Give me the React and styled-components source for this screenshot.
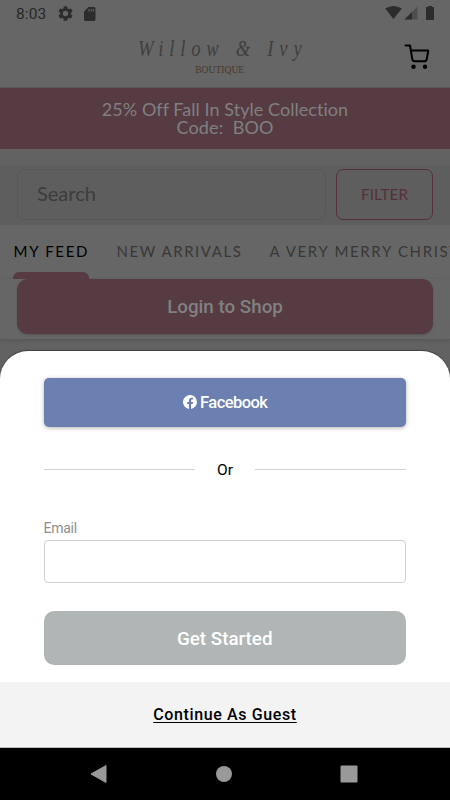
import React from "react";
import styled, { createGlobalStyle } from "styled-components";

const GlobalStyle = createGlobalStyle`
  * { box-sizing: border-box; }
  body { margin: 0; background: #000; }
  button, input { font: inherit; margin: 0; padding: 0; }
`;

const Screen = styled.div`
  width: 450px;
  height: 800px;
  display: flex;
  flex-direction: column;
  overflow: hidden;
  background: #666;
  font-family: Roboto, sans-serif;
`;

const Shop = styled.div`
  height: 400px;
  flex: none;
  background: #626262;
  font-family: Lato, sans-serif;
`;

const StatusBar = styled.div`
  height: 28px;
  display: flex;
  justify-content: space-between;
  padding: 0 15px 0 16px;
  background: #666;
`;

const StatusGroup = styled.div`
  display: flex;
  align-items: center;
  gap: 11px;
  height: 27px;
`;

const Clock = styled.span`
  font: 400 15.5px/28px Roboto, sans-serif;
  letter-spacing: 0.1px;
  color: #282828;
  width: 31px;
`;

const Header = styled.header`
  height: 60px;
  display: grid;
  grid-template-columns: 120px 1fr 120px;
  background: #666;
  border-bottom: 1px solid #5c5659;
`;

const Brand = styled.div`
  grid-column: 2;
  display: flex;
  flex-direction: column;
  align-items: center;
`;

const BrandName = styled.div`
  height: 36px;
  margin-left: -6px;
  white-space: nowrap;
  font: italic 400 24px/41px "Liberation Serif", serif;
  letter-spacing: 7.4px;
  word-spacing: 1px;
  transform: scaleX(0.78);
  color: #3f3f3f;
`;

const BrandSub = styled.div`
  font: 400 9.6px/12px "Liberation Serif", serif;
  color: #49382c;
  margin-left: -12px;
`;

const CartButton = styled.button`
  width: 26px;
  height: 26px;
  margin: 16px 21px 0 auto;
  border: 0;
  background: none;
  color: #000;
`;

const Banner = styled.div`
  height: 61px;
  padding-top: 12px;
  background: #563b43;
  color: #808080;
  text-align: center;
  font-size: 18px;
  line-height: 18px;
  white-space: pre;
`;

const BannerLine = styled.div`
  letter-spacing: ${(p) => p.$spacing}px;
`;

const SearchBand = styled.div`
  height: 60px;
  margin-top: 16px;
  padding: 4px 17px 0;
  display: flex;
  gap: 10px;
  background: #5e5e5e;
`;

const SearchBox = styled.div`
  width: 309px;
  height: 51px;
  padding-left: 19px;
  border: 1px solid #575757;
  border-radius: 7px;
  font-size: 20px;
  line-height: 47px;
  color: #3c3c3c;
`;

const FilterButton = styled.button`
  width: 97px;
  height: 51px;
  padding-bottom: 2px;
  border: 1px solid #563039;
  border-radius: 7px;
  background: none;
  color: #563039;
  font-size: 15.4px;
`;

const Tabs = styled.nav`
  height: 54px;
  padding-left: 13px;
  display: flex;
  overflow: hidden;
  background: #666;
  white-space: nowrap;
`;

const Tab = styled.div`
  flex: none;
  width: ${(p) => p.$width}px;
  margin-right: 27px;
  height: 54px;
  display: flex;
  flex-direction: column;
  font-size: 15px;
  line-height: 53px;
  text-indent: 0.5px;
  letter-spacing: ${(p) => p.$spacing}px;
  color: ${(p) => (p.$active ? "#000" : "#383838")};

  &::after {
    content: "";
    height: 7px;
    flex: none;
    margin-top: -6px;
    border-radius: 6px 6px 0 0;
    background: ${(p) => (p.$active ? "#563b43" : "transparent")};
  }
`;

const LoginWrap = styled.div`
  height: 61px;
  padding: 0 17px;
  background: #666;
  border-bottom: 1px solid #595959;
  box-shadow: 0 1px 3px #595959;
`;

const LoginButton = styled.button`
  display: block;
  width: 100%;
  height: 55px;
  border: 0;
  border-radius: 11px;
  background: #563b43;
  color: #818181;
  box-shadow: 0 1px 2px #555;
  font: 500 18.8px/56px Roboto, sans-serif;
`;

const Sheet = styled.section`
  height: 397px;
  flex: none;
  margin-top: -49px;
  position: relative;
  display: flex;
  flex-direction: column;
  border-radius: 28px 28px 0 0;
  background: #fff;
  box-shadow: 0 -1px 1px #404040;
  overflow: hidden;
`;

const SheetBody = styled.div`
  height: 330.5px;
  padding: 26.5px 44px 0 43.5px;
  width: 450px;
`;

const FacebookButton = styled.button`
  width: 362.5px;
  height: 49px;
  display: flex;
  align-items: center;
  justify-content: center;
  gap: 3px;
  padding-left: 1px;
  border: 0;
  border-radius: 5px;
  background: #6b80b1;
  box-shadow: 0 1px 4px rgba(0, 0, 0, 0.3);
  color: #fff;
  font-size: 16.5px;
  font-weight: 500;
  letter-spacing: -0.55px;
`;

const Divider = styled.div`
  display: grid;
  grid-template-columns: 151px 60px 151px;
  align-items: center;
  height: 20px;
  margin-top: 32.5px;
  text-align: center;
  font-size: 15.5px;
  color: #000;

  &::before, &::after {
    content: "";
    height: 1px;
    background: #d3d3d3;
  }
`;

const DividerText = styled.span`
  padding: 2px 0 0 1px;
`;

const Label = styled.label`
  display: block;
  height: 22px;
  margin-top: 38.5px;
  font-size: 14px;
  line-height: 20px;
  letter-spacing: -0.25px;
  color: #8e8e8e;
`;

const EmailInput = styled.input`
  display: block;
  width: 362.5px;
  height: 43px;
  border: 1px solid #ced2d2;
  border-radius: 4px;
  background: #fff;
  outline: none;
`;

const StartButton = styled.button`
  display: block;
  width: 362.5px;
  height: 54px;
  margin-top: 28px;
  padding-top: 2px;
  border: 0;
  border-radius: 10px;
  background: #b0b6b5;
  color: #fff;
  font-size: 18.8px;
  font-weight: 500;
`;

const GuestBar = styled.div`
  height: 66.5px;
  display: flex;
  justify-content: center;
  background: #f3f3f3;
  border-bottom: 1px solid #bbb;
`;

const GuestLink = styled.a`
  height: 39px;
  font-size: 16px;
  line-height: 66px;
  font-weight: 500;
  letter-spacing: 0.62px;
  color: #000;
  text-decoration: underline;
  text-decoration-thickness: 1px;
  text-underline-offset: 2px;
`;

const NavBar = styled.nav`
  height: 52px;
  display: flex;
  align-items: center;
  gap: 107px;
  padding-left: 90px;
  background: #000;
`;

const Icon = styled.svg`
  display: block;
  flex: none;
`;

export default function App() {
  return (
    <>
      <GlobalStyle />
      <Screen>
        <Shop>
          <StatusBar>
            <StatusGroup>
              <Clock>8:03</Clock>
              <Icon width="15" height="15" viewBox="2 2 20 20" fill="#2c2c2c">
                <path d="M19.14 12.94c.04-.3.06-.61.06-.94 0-.32-.02-.64-.07-.94l2.03-1.58a.49.49 0 0 0 .12-.61l-1.92-3.32a.49.49 0 0 0-.59-.22l-2.39.96c-.5-.38-1.03-.7-1.62-.94l-.36-2.54a.48.48 0 0 0-.48-.41h-3.84a.48.48 0 0 0-.47.41l-.36 2.54c-.59.24-1.13.57-1.62.94l-2.39-.96a.49.49 0 0 0-.59.22L2.74 8.87a.48.48 0 0 0 .12.61l2.03 1.58c-.05.3-.09.63-.09.94s.02.64.07.94l-2.03 1.58a.49.49 0 0 0-.12.61l1.92 3.32c.12.22.37.29.59.22l2.39-.96c.5.38 1.03.7 1.62.94l.36 2.54c.05.24.24.41.48.41h3.84c.24 0 .44-.17.47-.41l.36-2.54c.59-.24 1.13-.56 1.62-.94l2.39.96c.22.08.47 0 .59-.22l1.92-3.32a.48.48 0 0 0-.12-.61l-2.01-1.58zM12 15.6a3.6 3.6 0 1 1 0-7.2 3.6 3.6 0 0 1 0 7.2z" />
              </Icon>
              <Icon width="12" height="14" viewBox="0 0 12 14">
                <path d="M4.5 0H10a1.5 1.5 0 0 1 1.5 1.5v11A1.5 1.5 0 0 1 10 14H1.5A1.5 1.5 0 0 1 0 12.500V4.500Z" fill="#2c2c2c" />
                <path d="M5 2v2.500M7.200 2v2.500M9.400 2v2.500" stroke="#626262" strokeWidth="1.100" />
              </Icon>
            </StatusGroup>
            <Icon width="51" height="28" viewBox="0 0 51 28">
              <path d="M1.200 8.600Q9.500 3.200 17.800 8.600L9.500 19Z" fill="#2c2c2c" />
              <path d="M33.500 6.500V19.500H20.500Z" fill="#4e4e4e" />
              <path d="M28 12V19.500H20.500Z" fill="#2c2c2c" />
              <path d="M42 7h2V6h4v1h2v13h-8Z" fill="#2c2c2c" />
            </Icon>
          </StatusBar>
          <Header>
            <Brand>
              <BrandName>Willow &amp; Ivy</BrandName>
              <BrandSub>BOUTIQUE</BrandSub>
            </Brand>
            <CartButton aria-label="Cart">
              <Icon width="26" height="26" viewBox="0 0 26 26" fill="none" stroke="#000" strokeWidth="2" strokeLinecap="round" strokeLinejoin="round">
                <path d="M1.500 1.500H6L8.300 15.200Q8.700 17.300 10.700 17.300H20.500Q22.300 17.300 22.700 15.300L24.300 6.600H7" />
                <circle cx="9.500" cy="22.700" r="1.200" fill="#000" />
                <circle cx="21" cy="22.700" r="1.200" fill="#000" />
              </Icon>
            </CartButton>
          </Header>
          <Banner>
            <BannerLine $spacing={0.05}>25% Off Fall In Style Collection</BannerLine>
            <BannerLine $spacing={0.1}>Code:  BOO</BannerLine>
          </Banner>
          <SearchBand>
            <SearchBox>Search</SearchBox>
            <FilterButton>FILTER</FilterButton>
          </SearchBand>
          <Tabs>
            <Tab $active $width={76} $spacing={1.7}>MY FEED</Tab>
            <Tab $width={126} $spacing={1.55}>NEW ARRIVALS</Tab>
            <Tab $width={240} $spacing={1.65}>A VERY MERRY CHRISTMAS</Tab>
          </Tabs>
          <LoginWrap>
            <LoginButton>Login to Shop</LoginButton>
          </LoginWrap>
        </Shop>
        <Sheet>
          <SheetBody>
            <FacebookButton>
              <Icon width="14" height="14" viewBox="0 0 24 24" fill="#fff">
                <path d="M24 12a12 12 0 1 0-13.875 11.854V15.470H7.078V12h3.047V9.356c0-3.007 1.792-4.669 4.533-4.669 1.312 0 2.686.235 2.686.235v2.953H15.830c-1.491 0-1.956.925-1.956 1.874V12h3.328l-.532 3.470h-2.796v8.384A12 12 0 0 0 24 12Z" />
              </Icon>
              Facebook
            </FacebookButton>
            <Divider>
              <DividerText>Or</DividerText>
            </Divider>
            <Label htmlFor="email">Email</Label>
            <EmailInput id="email" />
            <StartButton>Get Started</StartButton>
          </SheetBody>
          <GuestBar>
            <GuestLink>Continue As Guest</GuestLink>
          </GuestBar>
        </Sheet>
        <NavBar>
          <Icon width="18" height="20" viewBox="0 0 18 20">
            <path d="M1 10 16 1.500V18.500Z" fill="#999" stroke="#999" strokeLinejoin="round" />
          </Icon>
          <Icon width="18" height="18" viewBox="0 0 18 18">
            <circle cx="9" cy="9" r="8" fill="#999" />
          </Icon>
          <Icon width="18" height="18" viewBox="0 0 18 18">
            <rect x="0.500" y="0.500" width="17" height="17" rx="1" fill="#999" />
          </Icon>
        </NavBar>
      </Screen>
    </>
  );
}
